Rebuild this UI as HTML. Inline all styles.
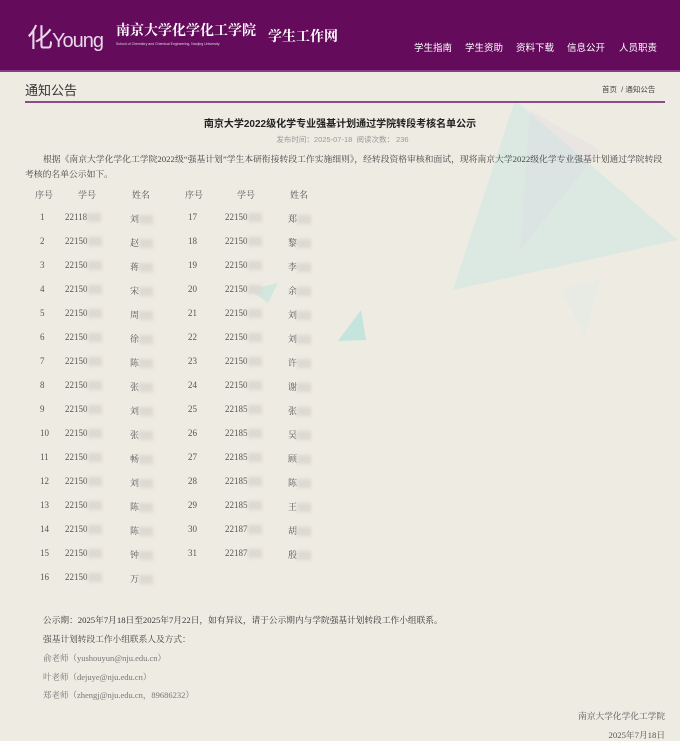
<!DOCTYPE html>
<html><head><meta charset="utf-8"><style>
*{margin:0;padding:0;box-sizing:border-box}
body{width:680px;height:739px;background:#eeebe2;font-family:"Liberation Serif","Noto Serif CJK SC","Noto Sans CJK SC",serif;color:#555;position:relative;overflow:hidden}
.hd{position:absolute;left:0;top:0;width:680px;height:72px;background:#640b5c;border-bottom:2px solid #8a3d84}
.nav{position:absolute;top:40px;font-family:"Liberation Sans","Noto Sans CJK SC",sans-serif;font-size:9.5px;color:#fff}
.s{font-family:"Liberation Sans","Noto Sans CJK SC",sans-serif}
.t{position:absolute;font-size:9px;color:#555;white-space:nowrap}
.b{display:inline-block;width:14px;height:9px;background:#ddd9d2;filter:blur(1.5px);vertical-align:middle}
</style></head><body>
<svg style="position:absolute;left:0;top:0" width="680" height="739">
<polygon points="515,100 678,240 453,290" fill="#cce8e2" opacity="0.55"/>
<polygon points="530,110 600,150 520,250" fill="#ddd8e6" opacity="0.3"/>
<polygon points="361,310 366,340 338,341" fill="#a8e0dc" opacity="0.6"/>
<polygon points="250,290 278,283 268,303" fill="#a8e0dc" opacity="0.4"/>
<polygon points="560,290 600,280 585,335" fill="#d8ebe6" opacity="0.3"/>
</svg>
<div class="hd">
<div style="position:absolute;left:27px;top:18px;color:#e8d8ea;font-size:26px;font-family:'Liberation Sans',sans-serif;letter-spacing:-1px">化<span style="font-size:20px">Young</span></div>
<div style="position:absolute;left:116px;top:20px;color:#fff;font-size:14px;font-weight:bold;font-family:'Noto Serif CJK SC',serif">南京大学化学化工学院</div>
<div style="position:absolute;left:116px;top:42px;color:#ddd;font-size:3.5px" class="s">School of Chemistry and Chemical Engineering, Nanjing University</div>
<div style="position:absolute;left:268px;top:26px;color:#fff;font-size:14px;font-weight:bold;font-family:'Noto Serif CJK SC',serif">学生工作网</div>
<div class="nav" style="left:414px">学生指南</div>
<div class="nav" style="left:465px">学生资助</div>
<div class="nav" style="left:516px">资料下载</div>
<div class="nav" style="left:567px">信息公开</div>
<div class="nav" style="left:619px">人员职责</div>
</div>
<div class="s" style="position:absolute;left:25px;top:80px;font-size:13px;color:#333">通知公告</div>
<div class="s" style="position:absolute;left:602px;top:84px;font-size:7.5px;color:#444">首页 &nbsp;/ 通知公告</div>
<div style="position:absolute;left:25px;top:101px;width:640px;height:2px;background:#8a4d8a"></div>
<div class="s" style="position:absolute;left:0;width:680px;top:115px;text-align:center;font-size:10px;font-weight:bold;color:#222">南京大学2022级化学专业强基计划通过学院转段考核名单公示</div>
<div class="s" style="position:absolute;left:0;width:680px;top:134px;text-align:center;font-size:7.5px;color:#999;padding-left:5px">发布时间：2025-07-18 &nbsp;阅读次数： 236</div>
<div style="position:absolute;left:25px;top:152px;width:645px;font-size:8.8px;line-height:14.5px;color:#444;text-indent:18px">根据《南京大学化学化工学院2022级“强基计划”学生本研衔接转段工作实施细则》，经转段资格审核和面试，现将南京大学2022级化学专业强基计划通过学院转段考核的名单公示如下。</div>
<div class="t" style="left:35px;top:188px">序号</div><div class="t" style="left:78px;top:188px">学号</div><div class="t" style="left:132px;top:188px">姓名</div>
<div class="t" style="left:185px;top:188px">序号</div><div class="t" style="left:237px;top:188px">学号</div><div class="t" style="left:290px;top:188px">姓名</div>
<div id="rows"></div>
<script>
var L=["刘","赵","蒋","宋","周","徐","陈","张","刘","张","畅","刘","陈","陈","钟","万"];
var R=["郑","黎","李","余","刘","刘","许","谢","张","吴","顾","陈","王","胡","殷"];
var h="";
for(var i=0;i<16;i++){var y=212+i*24;
h+='<div class="t" style="left:40px;top:'+y+'px">'+(i+1)+'</div>';
h+='<div class="t" style="left:65px;top:'+y+'px">'+(i==0?'22118':'22150')+'<span class="b"></span></div>';
h+='<div class="t" style="left:130px;top:'+y+'px">'+L[i]+'<span class="b"></span></div>';
if(i<15){var id=i<8?'22150':(i<13?'22185':'22187');
h+='<div class="t" style="left:188px;top:'+y+'px">'+(i+17)+'</div>';
h+='<div class="t" style="left:225px;top:'+y+'px">'+id+'<span class="b"></span></div>';
h+='<div class="t" style="left:288px;top:'+y+'px">'+R[i]+'<span class="b"></span></div>';}}
document.getElementById("rows").innerHTML=h;
</script>
<div style="position:absolute;left:43px;top:614px;font-size:8.7px;color:#333">公示期：2025年7月18日至2025年7月22日，如有异议，请于公示期内与学院强基计划转段工作小组联系。</div>
<div style="position:absolute;left:43px;top:633px;font-size:8.7px;color:#444">强基计划转段工作小组联系人及方式：</div>
<div style="position:absolute;left:43px;top:652px;font-size:8.5px;color:#777">俞老师（yushouyun@nju.edu.cn）</div>
<div style="position:absolute;left:43px;top:671px;font-size:8.5px;color:#777">叶老师（dejuye@nju.edu.cn）</div>
<div style="position:absolute;left:43px;top:689px;font-size:8.5px;color:#777">郑老师（zhengj@nju.edu.cn，89686232）</div>
<div style="position:absolute;right:15px;top:710px;font-size:8.7px;color:#555">南京大学化学化工学院</div>
<div style="position:absolute;right:15px;top:729px;font-size:8.7px;color:#555">2025年7月18日</div>
</body></html>
